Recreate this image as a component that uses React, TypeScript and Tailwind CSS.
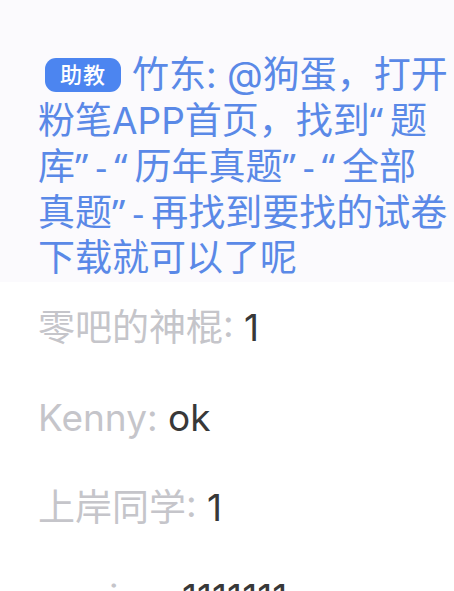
function P({ children }: { children: string }) {
  return <span className="font-['Noto_Sans'] tracking-[7px]">{children}</span>;
}

export default function App() {
  const rows = [
    { name: "零吧的神棍", text: "1" },
    { name: "Kenny", text: "ok" },
    { name: "上岸同学", text: "1" },
    { name: "carrina", text: "1111111" },
  ];
  return (
    <div className="w-[454px] h-[591px] overflow-hidden bg-white font-['Inter','Noto_Sans_CJK_SC',sans-serif]">
      <div className="bg-[#fbfafd] pt-[52px] pl-[38px] h-[282px]">
        <p className="text-[37px] leading-[45px] text-[#5a89e7] whitespace-nowrap">
          <span className="inline-flex items-center justify-center align-[5px] h-[34px] w-[76px] mr-[11px] ml-[7px] rounded-[11px] bg-[#4c85f0] text-white text-[22px] leading-none font-medium tracking-[1px]">
            助教
          </span>
          竹东: @狗蛋，打开
          <br />
          粉笔APP首页，找到<P>“</P>题
          <br />
          库<P>”-“</P>历年真题<P>”-“</P>全部
          <br />
          真题<P>”-</P>再找到要找的试卷
          <br />
          下载就可以了呢
        </p>
      </div>
      <div className="pl-[38px] pt-[23px] flex flex-col gap-[45px]">
        {rows.map((r) => (
          <div key={r.name} className="text-[37px] leading-[45px] whitespace-nowrap">
            <span className="text-[#c5c5ca]">{r.name}: </span>
            <span className="text-[#383838]">{r.text}</span>
          </div>
        ))}
      </div>
    </div>
  );
}
